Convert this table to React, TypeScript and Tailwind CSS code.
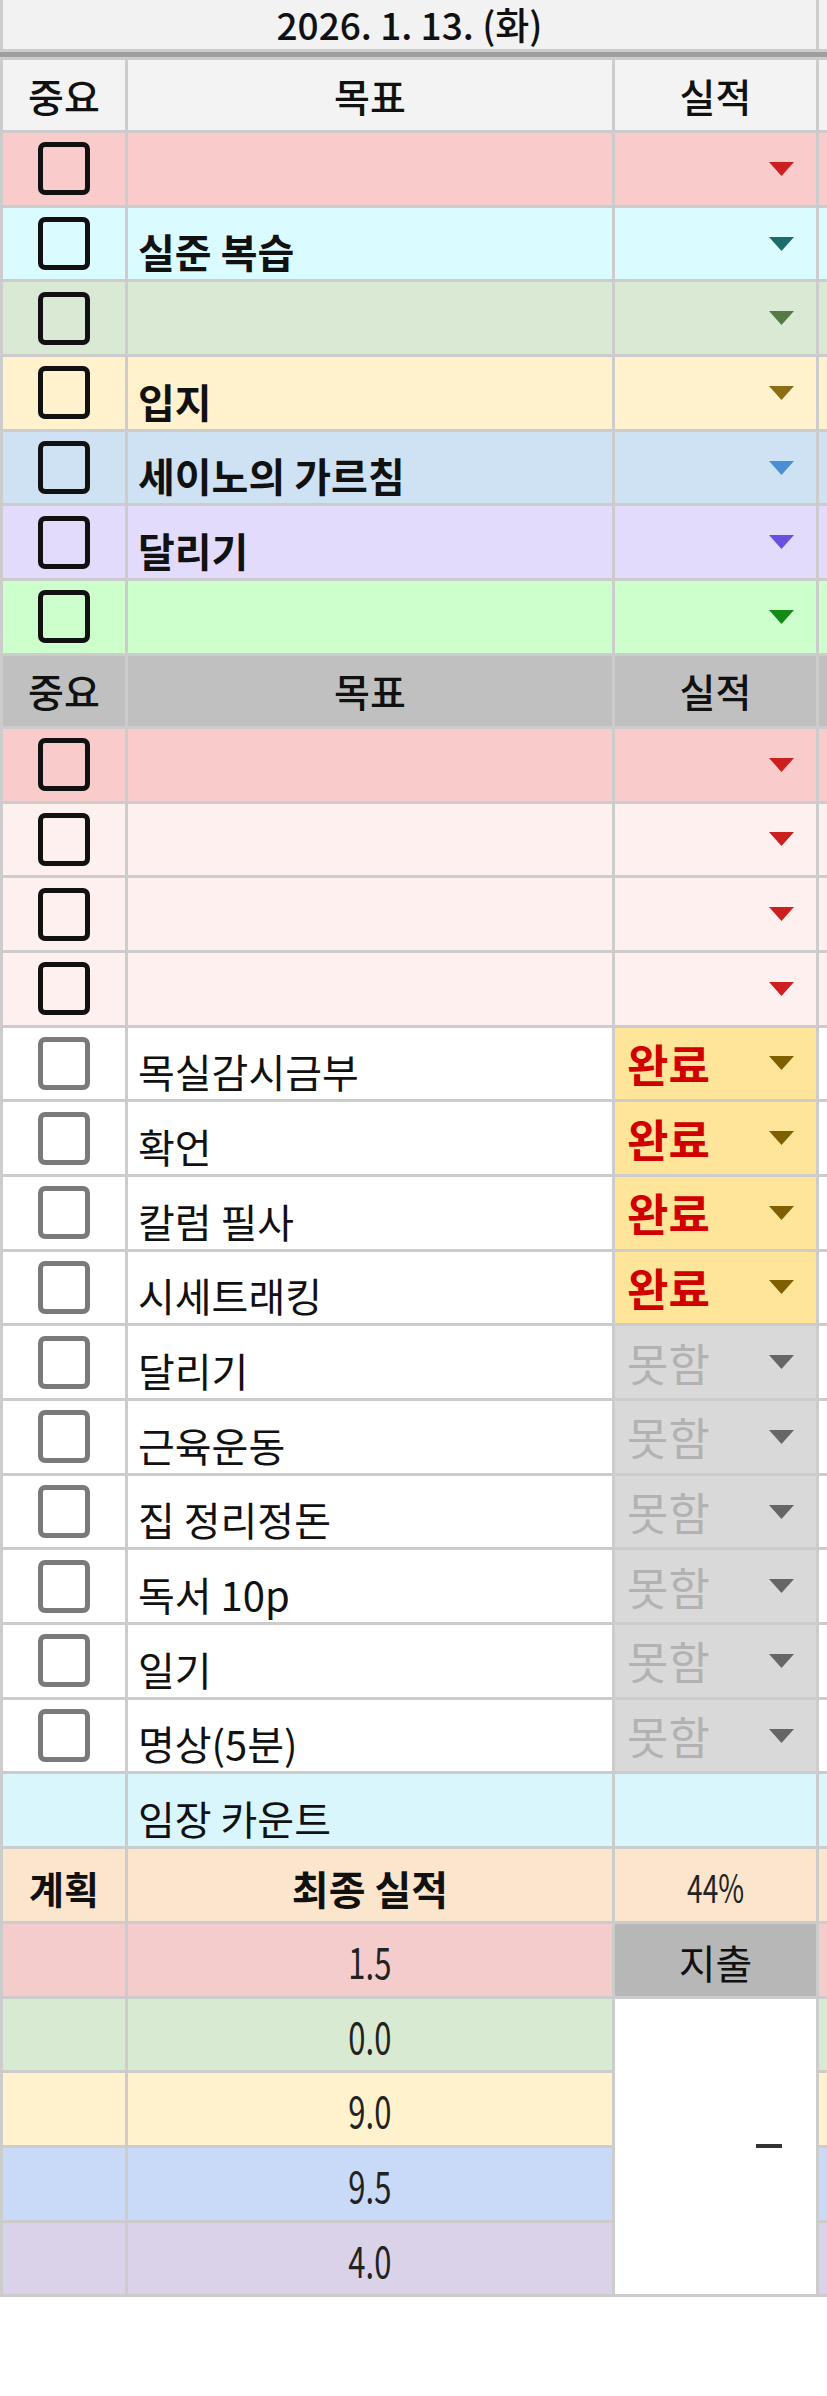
import React from "react";

const FONT = "font-['Noto_Sans_CJK_KR','Noto_Sans',sans-serif]";

function Tri({ color }: { color: string }) {
  return (
    <svg width="25" height="14" viewBox="0 0 25 14" className="block">
      <polygon points="0,0 25,0 12.5,14" fill={color} />
    </svg>
  );
}

function Box({ dark }: { dark: boolean }) {
  return dark ? (
    <div className="w-[52px] h-[53px] border-[5px] border-[#111] rounded-[7px]" />
  ) : (
    <div className="w-[52px] h-[53px] border-[5px] border-[#7a7a7a] rounded-[7px]" />
  );
}

const H = "h-[71.7px]";
const ITEM = "flex items-end pl-[10px] pb-[4px] text-[40px] leading-[1.2] text-[#111]";
const NUM = "flex items-end justify-center pb-[9px] text-[43px] leading-[1.2] text-[#222]";

type TopRow = { bg: string; tri: string; text: string };

const topRows: TopRow[] = [
  { bg: "#f9cbcb", tri: "#cc1f1f", text: "" },
  { bg: "#dafbff", tri: "#1e6b6b", text: "실준 복습" },
  { bg: "#d9e9d4", tri: "#557a45", text: "" },
  { bg: "#fff2cc", tri: "#8c6d14", text: "입지" },
  { bg: "#cfe2f3", tri: "#4a8fd6", text: "세이노의 가르침" },
  { bg: "#e2dbfc", tri: "#6b4fe0", text: "달리기" },
  { bg: "#ccffcc", tri: "#138a13", text: "" },
];

const pinkRows: TopRow[] = [
  { bg: "#f9cbcb", tri: "#cc1f1f", text: "" },
  { bg: "#fff0f0", tri: "#cc1f1f", text: "" },
  { bg: "#fff0f0", tri: "#cc1f1f", text: "" },
  { bg: "#fff0f0", tri: "#cc1f1f", text: "" },
];

const doneRows = ["목실감시금부", "확언", "칼럼 필사", "시세트래킹"];
const notRows = ["달리기", "근육운동", "집 정리정돈", "독서 10p", "일기", "명상(5분)"];

const numRows = [
  { bg: "#d9ead3", v: "0.0" },
  { bg: "#fff2cc", v: "9.0" },
  { bg: "#c9daf8", v: "9.5" },
  { bg: "#d9d2e9", v: "4.0" },
];

function Num({ v }: { v: string }) {
  return <span className="inline-block scale-x-[0.72]">{v}</span>;
}

function ColorRow({ r }: { r: TopRow }) {
  return (
    <>
      <div className={`${H} flex items-center justify-center`} style={{ background: r.bg }}>
        <Box dark />
      </div>
      <div className={`${H} ${ITEM} font-bold`} style={{ background: r.bg }}>
        {r.text}
      </div>
      <div className={`${H} flex items-center justify-end pr-[22px]`} style={{ background: r.bg }}>
        <Tri color={r.tri} />
      </div>
      <div className={H} style={{ background: r.bg }} />
    </>
  );
}

function StatusRow({ text, done }: { text: string; done: boolean }) {
  return (
    <>
      <div className={`${H} flex items-center justify-center bg-white`}>
        <Box dark={false} />
      </div>
      <div className={`${H} ${ITEM} bg-white`}>{text}</div>
      {done ? (
        <div className={`${H} flex items-center justify-between pl-[12px] pr-[22px] bg-[#ffe599]`}>
          <span className="text-[45px] leading-none font-bold text-[#d00000]">완료</span>
          <Tri color="#7f6000" />
        </div>
      ) : (
        <div className={`${H} flex items-center justify-between pl-[12px] pr-[22px] bg-[#d9d9d9]`}>
          <span className="text-[45px] leading-none text-[#b2b2b2]">못함</span>
          <Tri color="#666666" />
        </div>
      )}
      <div className={`${H} bg-white`} />
    </>
  );
}

function Header({ bg }: { bg: string }) {
  const c = "h-[70px] flex items-center justify-center text-[39px] leading-none text-[#111] font-medium";
  return (
    <>
      <div className={c} style={{ background: bg }}>
        중요
      </div>
      <div className={c} style={{ background: bg }}>
        목표
      </div>
      <div className={c} style={{ background: bg }}>
        실적
      </div>
      <div className="h-[70px]" style={{ background: bg }} />
    </>
  );
}

export default function App() {
  return (
    <div className={`w-[827px] h-[2396px] bg-white ${FONT}`}>
      <div className="grid grid-cols-[122px_484px_201px_1fr] gap-[3px] bg-[#cccccc] pl-[3px] pb-[3px]">
        <div className="col-span-3 h-[49px] bg-[#f2f2f2] flex items-center justify-center text-[37px] leading-none text-[#111] font-medium">
          2026. 1. 13. (화)
        </div>
        <div className="h-[49px] bg-[#f2f2f2]" />
        <div className="col-span-4 h-[5px] bg-[#9f9f9f] -ml-[3px]" />
        <Header bg="#f3f3f3" />
        {topRows.map((r, i) => (
          <ColorRow key={"t" + i} r={r} />
        ))}
        <Header bg="#c0c0c0" />
        {pinkRows.map((r, i) => (
          <ColorRow key={"p" + i} r={r} />
        ))}
        {doneRows.map((t) => (
          <StatusRow key={t} text={t} done />
        ))}
        {notRows.map((t, i) => (
          <StatusRow key={"n" + i} text={t} done={false} />
        ))}
        {/* 임장 카운트 */}
        <div className={`${H} bg-[#d9f6fc]`} />
        <div className={`${H} bg-[#d9f6fc] ${ITEM}`}>임장 카운트</div>
        <div className={`${H} bg-[#d9f6fc]`} />
        <div className={`${H} bg-[#d9f6fc]`} />
        {/* 계획 */}
        <div className={`${H} bg-[#fce5cd] flex items-end justify-center pb-[10px] text-[38px] leading-[1.2] font-bold text-[#111]`}>
          계획
        </div>
        <div className={`${H} bg-[#fce5cd] flex items-end justify-center pb-[9px] text-[40px] leading-[1.2] font-bold text-[#111]`}>
          최종 실적
        </div>
        <div className={`${H} bg-[#fce5cd] flex items-end justify-center pb-[11px] text-[39px] leading-[1.2] text-[#222]`}>
          <Num v="44%" />
        </div>
        <div className={`${H} bg-[#fce5cd]`} />
        {/* 1.5 / 지출 */}
        <div className={`${H} bg-[#f4cccc]`} />
        <div className={`${H} bg-[#f4cccc] ${NUM}`}>
          <Num v="1.5" />
        </div>
        <div className={`${H} bg-[#b7b7b7] flex items-end justify-center pb-[10px] text-[40px] leading-[1.2] text-[#111]`}>
          지출
        </div>
        <div className={`${H} bg-[#f4cccc]`} />
        {numRows.map((r, i) => (
          <React.Fragment key={"num" + i}>
            <div className={H} style={{ background: r.bg }} />
            <div className={`${H} ${NUM}`} style={{ background: r.bg }}>
              <Num v={r.v} />
            </div>
            {i === 0 && (
              <div className="row-span-4 bg-white flex items-center justify-end pr-[34px]">
                <div className="w-[26px] h-[4px] bg-[#333]" />
              </div>
            )}
            <div className={H} style={{ background: r.bg }} />
          </React.Fragment>
        ))}
      </div>
    </div>
  );
}
